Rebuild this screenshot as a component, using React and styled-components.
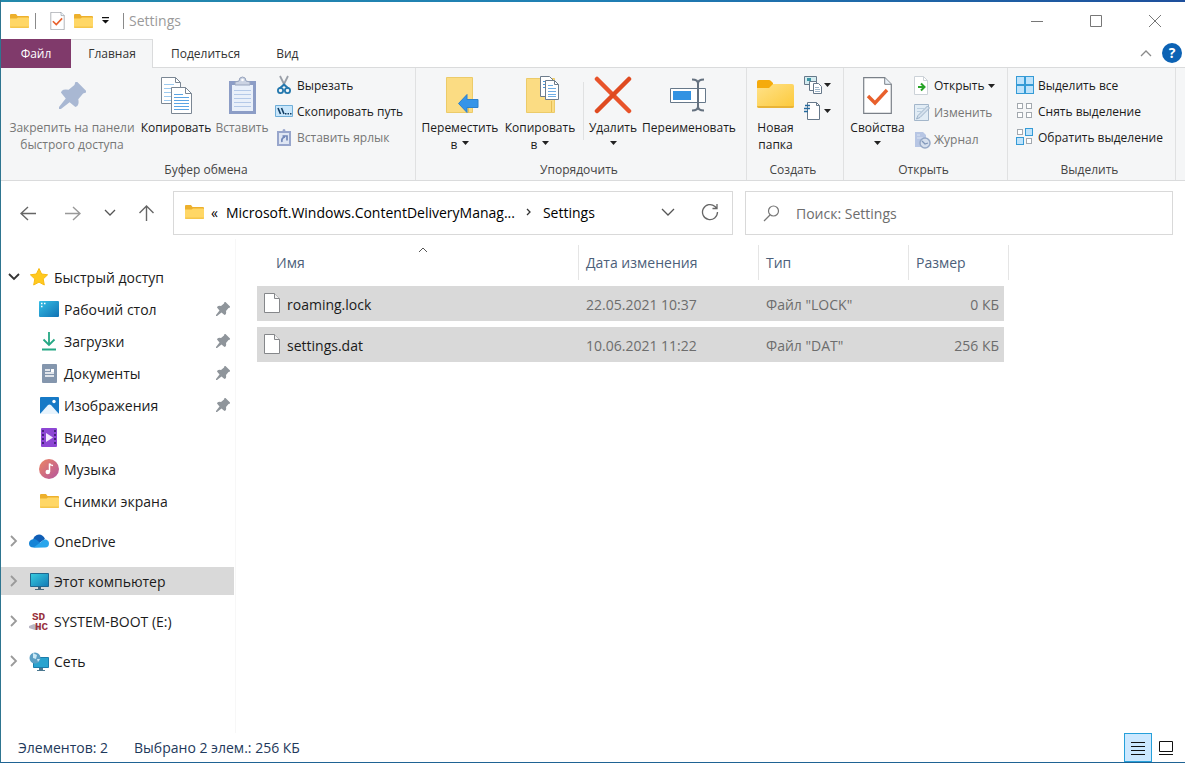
import React from 'react'
import styled, { createGlobalStyle, css } from 'styled-components'

const GlobalStyle = createGlobalStyle`
  * {
    box-sizing: border-box;
  }
  body {
    margin: 0;
    font-family: "Segoe UI", "Open Sans", "Noto Sans", sans-serif;
    font-size: 14px;
    color: #1b1b1b;
    background: white;
  }
  button, input {
    font: inherit;
    color: inherit;
    border: 0;
    padding: 0;
    background: none;
  }
  svg {
    display: block;
    flex: 0 0 auto;
  }
`

const Window = styled.div`
  display: flex;
  flex-direction: column;
  min-height: 100vh;
  border-left: 1px solid #2e7590;
  border-bottom: 1px solid #1f6394;
  & > .accent {
    height: 2px;
    background: linear-gradient(90deg, #2389ab, #1f7fb4 50%, #1e4f9c);
  }
`

/* title bar */

const TitleBar = styled.header`
  display: flex;
  align-items: center;
  height: 37px;
  padding: 0 1px 0 8px;
  & .divider {
    width: 1px;
    height: 16px;
    background: #8a8a8a;
  }
  & h1 {
    margin: 0 auto 0 0;
    font-size: 14px;
    font-weight: 400;
    color: #9a9a9a;
  }
`

const QuickButton = styled.button`
  display: flex;
  justify-content: center;
  width: ${props => props.$width}px;
`

const CaptionButton = styled.button`
  display: flex;
  align-items: center;
  justify-content: center;
  width: 59px;
  height: 37px;
`

/* ribbon */

const TabBar = styled.nav`
  display: flex;
  height: 29px;
  font-size: 12px;
  border-bottom: 1px solid #dadbdc;
  & .tools {
    display: flex;
    align-items: center;
    gap: 10px;
    margin-left: auto;
    padding-right: 3px;
  }
`

const Tab = styled.button`
  height: 29px;
  padding: 0 18px;
  color: #333;
  ${props => props.$file && css`
    width: 70px;
    padding: 0;
    color: white;
    background: #803a6b;
  `}
  ${props => props.$active && css`
    width: 82px;
    padding: 0;
    background: #f5f6f7;
    box-shadow: inset -1px 1px #dadbdc;
  `}
`

const HelpButton = styled.button`
  width: 20px;
  height: 20px;
  border-radius: 50%;
  background: #0c62b4;
  color: white;
  font-size: 14px;
  font-weight: 700;
  line-height: 20px;
`

const Ribbon = styled.section`
  display: flex;
  height: 113px;
  background: #f5f6f7;
  border-bottom: 1px solid #dadbdc;
  font-size: 12px;
  line-height: 17px;
`

const Group = styled.div`
  flex: 0 0 ${props => props.$width}px;
  display: flex;
  flex-direction: column;
  border-right: 1px solid #e0e1e2;
  & .commands {
    display: flex;
    flex: 1;
    padding: 4px 4px 0;
  }
  & .caption {
    padding: 0 4px 2px 0;
    text-align: center;
    color: #444;
  }
`

const LargeButton = styled.button`
  display: flex;
  flex-direction: column;
  align-items: center;
  flex: 0 0 ${props => props.$width}px;
  white-space: nowrap;
  &:disabled {
    color: #767676;
  }
  & .icon {
    display: flex;
    align-items: center;
    height: 46px;
    margin-bottom: 1px;
  }
  & .second {
    display: flex;
    align-items: center;
    justify-content: center;
    gap: 5px;
    height: 17px;
  }
  & .caret {
    margin-bottom: 3px;
  }
`

const SmallColumn = styled.div`
  display: flex;
  flex-direction: column;
  padding-left: ${props => props.$indent || 4}px;
`

const SmallButton = styled.button`
  display: flex;
  align-items: center;
  gap: ${props => props.$gap || 4}px;
  height: ${props => props.$height || 26}px;
  white-space: nowrap;
  &:disabled {
    color: #767676;
  }
`

const Divider = styled.div`
  width: 1px;
  height: 58px;
  margin: 10px 2px 0 3px;
  background: #e0e1e2;
`

/* address line */

const NavRow = styled.div`
  display: grid;
  grid-template-columns: 160px 560fr 428fr;
  gap: 12px;
  height: 58px;
  padding: 10px 12px 4px 0;
  & .history {
    display: grid;
    grid-template-columns: 44px 44px 32px 40px;
    padding-left: 5px;
  }
  & .history button {
    display: flex;
    align-items: center;
    justify-content: center;
  }
`

const Address = styled.div`
  display: flex;
  align-items: center;
  min-width: 0;
  padding: 0 13px 2px 11px;
  border: 1px solid #d9d9d9;
  color: #000;
  & .actions {
    display: flex;
    gap: 26px;
    margin-left: auto;
  }
`

const CrumbList = styled.div`
  display: flex;
  align-items: center;
  gap: 10px;
  padding-left: 7px;
  white-space: nowrap;
  & span {
    margin-right: -2px;
  }
`

const Search = styled.label`
  display: flex;
  align-items: center;
  gap: 16px;
  padding: 0 17px;
  border: 1px solid #d9d9d9;
  & input {
    flex: 1;
    min-width: 0;
    outline: 0;
  }
  & input::placeholder {
    color: #6d6d6d;
    opacity: 1;
  }
`

/* main area */

const Main = styled.main`
  display: flex;
  flex: 1;
`

const Sidebar = styled.aside`
  flex: 0 0 235px;
  padding-top: 24px;
  border-right: 1px solid #f7f7f7;
  & ul {
    margin: 0;
    padding: 0;
    list-style: none;
  }
  & li {
    margin-bottom: 12px;
  }
  & li li {
    margin: 4px 0 0;
  }
`

const TreeItem = styled.button`
  display: flex;
  align-items: center;
  gap: 5px;
  width: 233px;
  height: 28px;
  padding: 0 4px 0 ${props => props.$nested ? 38 : 7}px;
  text-align: left;
  white-space: nowrap;
  background: ${props => props.$selected ? '#d9d9d9' : 'transparent'};
  & .icon {
    display: flex;
    justify-content: center;
    flex: 0 0 20px;
    margin-left: ${props => props.$nested ? 0 : 4}px;
  }
  & .pin {
    margin-left: auto;
  }
`

const Files = styled.div`
  flex: 1;
  padding-left: 21px;
`

const FileTable = styled.table`
  width: 752px;
  table-layout: fixed;
  border-collapse: separate;
  border-spacing: 0 6px;
  & th {
    position: relative;
    height: 35px;
    padding: 0 7px;
    text-align: left;
    font-weight: 400;
    color: #4c607a;
    border-right: 1px solid #e5e5e5;
  }
  & th:first-child {
    padding-left: 19px;
  }
  & th .sort {
    position: absolute;
    top: 2px;
    left: 161px;
  }
  & td {
    height: 35px;
    padding: 1px 7px 0;
    color: #6d6d6d;
    background: #d9d9d9;
  }
  & td:last-child {
    padding-right: 5px;
    text-align: right;
    border-right: 5px solid transparent;
    background-clip: padding-box;
  }
  & .name {
    display: flex;
    align-items: center;
    gap: 7px;
    color: #1b1b1b;
  }
  & .name svg {
    margin-bottom: 3px;
  }
`

const StatusBar = styled.footer`
  display: flex;
  align-items: center;
  gap: 26px;
  height: 29px;
  padding: 0 5px 0 17px;
  color: #1e395b;
  & .views {
    display: flex;
    margin-left: auto;
  }
`

const ViewButton = styled.button`
  display: flex;
  align-items: center;
  justify-content: center;
  width: 28px;
  height: 29px;
  ${props => props.$active && css`
    background: #cce8ff;
    border: 1px solid #26a0da;
  `}
`

/* icons */

const Caret = () => (
  <svg className="caret" width="7" height="4" viewBox="0 0 7 4"><path d="M0 0h7L3.500 4z" fill="#222" /></svg>
)

const Chevron = ({ d, width = 12, height = 12, color = '#555', stroke = 1.3 }) => (
  <svg width={width} height={height} viewBox={`0 0 ${width} ${height}`} fill="none" stroke={color} strokeWidth={stroke}>
    <path d={d} />
  </svg>
)

const FolderIcon = ({ width = 19, height = 16 }) => (
  <svg width={width} height={height} viewBox="0 0 19 16">
    <path d="M0 2q0-1 1-1h5l1.500 2H18q1 0 1 1v3H0z" fill="#edb02c" />
    <path d="M0 5.500h6.500l1.500-1h10q1 0 1 1V14q0 1-1 1H1q-1 0-1-1z" fill="#ffd766" />
    <path d="M0 13.500h19q0 1.500-1 1.500H1q-1 0-1-1.500z" fill="#f5c64b" />
  </svg>
)

const NewFolderIcon = () => (
  <svg width="37" height="32" viewBox="0 0 37 32">
    <defs>
      <linearGradient id="folder" x2="1" y2="1"><stop stopColor="#ffe28a" /><stop offset="1" stopColor="#fcc93a" /></linearGradient>
    </defs>
    <path d="M0 3q0-2 2-2h10q1 0 2 1l2 2v5H0z" fill="#f5ab0c" />
    <path d="M0 9h12l4-4h19q2 0 2 2v20q0 2-2 2H2q-2 0-2-2z" fill="url(#folder)" />
    <path d="M0 27h37q0 2-2 2H2q-2 0-2-2z" fill="#e9b437" />
  </svg>
)

const CheckPageIcon = ({ width, height }) => (
  <svg width={width} height={height} viewBox="0 0 29 37">
    <path d="M.7.7h21l6.600 6.600v29H.7z" fill="white" stroke="#7a8088" strokeWidth="1.200" />
    <path d="M21.700.7v6.600h6.600" fill="#e8f0f8" stroke="#7a8088" />
    <path d="M5 19l7 7L24 13" fill="none" stroke="#e8602c" strokeWidth="3.400" />
  </svg>
)

const PinIcon = ({ size = 14, color = '#8f959b' }) => (
  <svg width={size} height={size} viewBox="0 0 28 28" fill={color}>
    <path d="M17 0q1-1 2 0l9 9q1 1 0 2l-3 1-5 6q1 5-1 7l-2 1-6-5-9 7H0v-2l7-9-5-6 1-2q2-2 7-1l6-5z" />
  </svg>
)

const CopyPagesIcon = ({ width = 31, height = 37 }) => (
  <svg width={width} height={height} viewBox="0 0 31 37" stroke="#7b8794">
    <path d="M.5.5h14l5 5v21H.5z" fill="white" />
    <path d="M14.500.5v5h5" fill="none" />
    <path d="M3 7.500h10M3 11.500h13M3 15.500h7M3 19.500h7M3 23.500h7" stroke="#9ccaf0" />
    <path d="M10.500 10.500h14l6 6v20h-20z" fill="white" />
    <path d="M24.500 10.500v6h6" fill="none" />
    <path d="M13 17.500h9M13 20.500h15M13 23.500h15M13 26.500h15M13 29.500h15M13 32.500h15" stroke="#5aa4e4" />
  </svg>
)

const ClipboardIcon = () => (
  <svg width="27" height="38" viewBox="0 0 27 38">
    <path d="M0 5h27v33H0z" fill="#8c9dc6" />
    <path d="M3 9h21v26H3z" fill="#e9f0fa" />
    <path d="M5 14.500h17M5 18.500h17M5 22.500h17M5 26.500h17M5 30.500h17" stroke="#b4c9e8" />
    <path d="M6 9V6l4-1q0-4 3.500-4t3.500 4l4 1v3z" fill="#cbd3e3" stroke="#98a4bd" />
    <circle cx="13.500" cy="4" r="1.300" fill="white" />
  </svg>
)

const ScissorsIcon = () => (
  <svg width="18" height="20" viewBox="0 0 18 20" fill="none">
    <path d="M5 1l5 10M13 1L8 11" stroke="#9a9fa8" strokeWidth="1.800" />
    <circle cx="5.500" cy="15.500" r="2.600" stroke="#2478ae" strokeWidth="1.800" />
    <circle cx="12.500" cy="15.500" r="2.600" stroke="#2478ae" strokeWidth="1.800" />
    <path d="M4.500 13.500L9 9.500l4.500 4" stroke="#2478ae" strokeWidth="2" />
  </svg>
)

const PathIcon = () => (
  <svg width="18" height="12" viewBox="0 0 18 12">
    <path d="M.5.5h17v11H.5z" fill="#c8e6fb" stroke="#6faed8" />
    <path d="M3 3l2.500 6M6.500 3L9 9" stroke="#123d63" strokeWidth="1.600" />
    <path d="M10 8h1.500v1.500H10zM12.500 8H14v1.500h-1.500zM15 8h1.500v1.500H15z" fill="#123d63" />
  </svg>
)

const PasteLinkIcon = () => (
  <svg width="18" height="19" viewBox="0 0 18 19">
    <path d="M3 4h12v13H3z" fill="#dfe6f3" stroke="#98a6cc" strokeWidth="2" />
    <path d="M6 5V3h1.500q0-2 1.500-2t1.500 2H12v2z" fill="#98a6cc" />
    <path d="M7 14q-1-4 3-5M7.500 8H12v4.500" fill="none" stroke="#7287b8" strokeWidth="1.700" />
  </svg>
)

const MoveToIcon = () => (
  <svg width="40" height="38" viewBox="-6 0 40 38">
    <path d="M.5 1.500h26v35H.5z" fill="#fbdc83" stroke="#eccb69" />
    <path d="M22.500 27v9.500" stroke="#e6bf55" />
    <path d="M12.500 27.500L21 18.500v5h11v8H21v5z" fill="#3594e8" stroke="#2d81cc" />
  </svg>
)

const CopyToIcon = () => (
  <svg width="40" height="38" viewBox="-6 0 40 38">
    <path d="M.5 2.500h28v34H.5z" fill="#fbdc83" stroke="#eccb69" />
    <path d="M25.500 25v11" stroke="#e6bf55" />
    <path d="M14.500.5h9l4 4v16h-13z" fill="white" stroke="#6d7c8c" />
    <path d="M17 5.500h6M17 8.500h8M17 11.500h8" stroke="#4b96d8" />
    <path d="M19.500 4.500h9l4 4v15h-13z" fill="white" stroke="#6d7c8c" />
    <path d="M28.500 4.500v4h4" fill="none" stroke="#6d7c8c" />
    <path d="M22 9.500h5M22 12.500h8M22 15.500h8M22 18.500h8M22 20.500h8" stroke="#6fade4" />
  </svg>
)

const DeleteIcon = () => (
  <svg width="38" height="38" viewBox="0 0 38 38" strokeLinecap="round" strokeWidth="4.500">
    <path d="M3 3l32 32" stroke="#e8532a" />
    <path d="M35 3L3 35" stroke="#df4a20" />
  </svg>
)

const RenameIcon = () => (
  <svg width="38" height="34" viewBox="0 0 38 34" fill="none">
    <path d="M.5 10.500h35v14H.5z" fill="white" stroke="#66788a" />
    <path d="M3 13h18v9H3z" fill="#3292e2" />
    <path d="M22 1.500q6 0 6 4v23q0 4-6 4M34 1.500q-6 0-6 4v23q0 4 6 4" stroke="#64717f" strokeWidth="2" />
  </svg>
)

const NewItemIcon = () => (
  <svg width="18" height="18" viewBox="0 0 18 18" stroke="#66788a">
    <path d="M.5.5h12v8H.5z" fill="#d4ecf0" />
    <path d="M3 3.500h4" stroke="#3b94a4" strokeWidth="3" />
    <path d="M5.500 5.500h7v9h-7z" fill="white" />
    <path d="M9.500 7.500h5l3 3v7h-8z" fill="white" />
    <path d="M11 11.500h4M11 13.500h5M11 15.500h5" stroke="#9eb6ca" />
  </svg>
)

const EasyAccessIcon = () => (
  <svg width="18" height="20" viewBox="0 0 18 20">
    <path d="M3.500 1.500h9l3 3v14h-12z" fill="white" stroke="#66788a" />
    <path d="M12.500 1.500v3h3" fill="none" stroke="#66788a" />
    <path d="M1 4.500h5M0 7.500h6M0 10.500h4" stroke="#246a9e" strokeWidth="1.600" />
  </svg>
)

const OpenIcon = () => (
  <svg width="16" height="19" viewBox="0 0 16 19">
    <path d="M.5.5h9l4 4v14H.5z" fill="white" stroke="#ccd2d8" />
    <path d="M9.500.5v4h4" fill="none" stroke="#ccd2d8" />
    <path d="M4 11h6M7 7.500l3.500 3.500L7 14.500" fill="none" stroke="#28a428" strokeWidth="2" />
  </svg>
)

const EditIcon = () => (
  <svg width="16" height="18" viewBox="0 0 16 18">
    <path d="M.5.5h14v16H.5z" fill="#e1ecf5" stroke="#a3b6ca" />
    <path d="M3 4.500h7M3 7.500h4" stroke="#bccfe0" />
    <path d="M2.500 15l1.500-3.500L13.500 2l2 2L6 13.500z" fill="#d5e1ed" stroke="#9db3c9" />
  </svg>
)

const HistoryIcon = () => (
  <svg width="17" height="18" viewBox="0 0 17 18">
    <path d="M1 1h8l3 3v12H1z" fill="#b7c6e4" />
    <path d="M3 4h3M3 7h6" stroke="#dce5f3" />
    <circle cx="11" cy="12" r="5" fill="#d5dfed" stroke="#96a9c7" strokeWidth="1.500" />
    <path d="M8 10l3 3 3-1" fill="none" stroke="#8298ba" strokeWidth="1.300" />
  </svg>
)

// four tiles, 'filled' says which ones are selected
const TilesIcon = ({ filled, solid }) => {
  const corners = solid ? [[0, 0], [9, 0], [0, 9], [9, 9]] : [[1, 1], [10, 1], [1, 10], [10, 10]]
  return (
    <svg width="18" height="18" viewBox="0 0 18 18">
      {corners.map(([x, y], i) => {
        const on = filled[i]
        const grow = on && !solid ? 1 : 0
        const size = solid ? 8 : on ? 7 : 5
        return (
          <rect key={i} x={x + 0.5 - grow} y={y + 0.5 - grow} width={size} height={size}
            fill={on ? '#bfe3fb' : 'white'} stroke={on ? '#359bd6' : '#a2a8ae'} />
        )
      })}
    </svg>
  )
}

const StarIcon = () => (
  <svg width="20" height="20" viewBox="0 0 20 20">
    <path d="M10 1.500l2.600 5.500 6 .8-4.400 4.200 1.100 6L10 15.100 4.700 18l1.100-6L1.400 7.800l6-.8z" fill="#ffc91f" stroke="#f9bb10" strokeLinejoin="round" />
  </svg>
)

const DesktopIcon = () => (
  <svg width="20" height="16" viewBox="0 0 20 16">
    <defs>
      <linearGradient id="desk" x2="1" y2="1"><stop stopColor="#36bfe6" /><stop offset="1" stopColor="#1072b4" /></linearGradient>
    </defs>
    <rect width="20" height="16" rx="1" fill="url(#desk)" />
    <path d="M2 2.500h1.500M2 5.500h1.500M5 2.500h1.500" stroke="white" strokeWidth="1.300" />
  </svg>
)

const DownloadIcon = () => (
  <svg width="16" height="20" viewBox="0 0 16 20" fill="none" stroke="#25a884" strokeWidth="1.800">
    <path d="M8 1v13M2.500 8.500L8 14l5.500-5.500M1 18.500h14" />
  </svg>
)

const DocumentIcon = () => (
  <svg width="15" height="19" viewBox="0 0 15 19">
    <rect width="15" height="19" rx="1" fill="#8496ad" />
    <path d="M3 6h5M3 9h9M3 12h9" stroke="white" strokeWidth="1.300" />
    <path d="M9 5h3v3H9z" fill="white" />
  </svg>
)

const PictureIcon = () => (
  <svg width="19" height="17" viewBox="0 0 19 17">
    <rect width="19" height="17" rx="1" fill="#1679c6" />
    <path d="M0 17l8-9q1.500-1 3 0l8 9z" fill="#e8f4fd" />
    <circle cx="14" cy="4.500" r="1.700" fill="white" />
  </svg>
)

const VideoIcon = () => (
  <svg width="16" height="19" viewBox="0 0 16 19">
    <rect width="16" height="19" rx="1" fill="#8d46d4" />
    <path d="M2 2v16M14 2v16" stroke="#45207d" strokeWidth="2" strokeDasharray="2 2" />
    <path d="M5 5v9l7-4.500z" fill="#f2e7ff" />
  </svg>
)

const MusicIcon = () => (
  <svg width="20" height="20" viewBox="0 0 20 20">
    <defs>
      <linearGradient id="music" x2="1" y2="1"><stop stopColor="#ed8663" /><stop offset="1" stopColor="#b4559f" /></linearGradient>
    </defs>
    <circle cx="10" cy="10" r="10" fill="url(#music)" />
    <path d="M10.500 13V4.500q1 2 3.500 2" fill="none" stroke="white" strokeWidth="1.500" />
    <circle cx="8.800" cy="13" r="2.300" fill="white" />
  </svg>
)

const CloudIcon = () => (
  <svg width="20" height="14" viewBox="0 0 20 14">
    <path d="M4 6q1-5 6-5.500 4 0 6 4.500l-7 5z" fill="#0f5db5" />
    <path d="M4.500 13.500Q0 13.500 0 9.500q0-4 5-4.500 2 0 4 2l6 6z" fill="#1584d6" />
    <path d="M4.500 13.500L12 8q2-3 5-2.500 3 1 3 4 0 4-4 4z" fill="#29a5ec" />
  </svg>
)

const MonitorIcon = () => (
  <svg width="19" height="17" viewBox="0 0 19 17">
    <defs>
      <linearGradient id="screen" x2="1" y2="1"><stop stopColor="#37cde0" /><stop offset="1" stopColor="#1479b5" /></linearGradient>
    </defs>
    <path d="M.5.5h18v13H.5z" fill="url(#screen)" stroke="#20668f" />
    <path d="M8 14h3v2H8zM5 16h9v1H5z" fill="#46677c" />
  </svg>
)

const SdCardIcon = () => (
  <svg width="20" height="21" viewBox="0 0 20 21" fontFamily="Liberation Mono" fontWeight="700" fontSize="11" fill="#98303c">
    <path d="M0 15l5-2 6 2v3l-5 1-6-2z" fill="#b9b6c4" />
    <text x="3" y="9">SD</text>
    <text x="6" y="19">HC</text>
  </svg>
)

const NetworkIcon = () => (
  <svg width="20" height="19" viewBox="0 0 20 19">
    <path d="M4.500 5.500h15v10h-15z" fill="#29a3cf" stroke="#1b7cab" />
    <path d="M10 16h4v2h-4zM8 18h8v1H8z" fill="#4b7890" />
    <circle cx="6" cy="6" r="5.500" fill="#5b9fc4" />
    <path d="M4 1l4 2-1 4-3-1zM8 7l3 0-2 3z" fill="#c9e8f5" />
  </svg>
)

const FileIcon = () => (
  <svg width="16" height="20" viewBox="0 0 16 20" stroke="#85878a">
    <path d="M.5.5h10l5 5v14H.5z" fill="white" />
    <path d="M10.500.5v5h5" fill="#f1f1f1" />
  </svg>
)

const ArrowIcon = ({ color = '#666', d }) => (
  <svg width="17" height="17" viewBox="0 0 17 17" fill="none" stroke={color} strokeWidth="1.400"><path d={d} /></svg>
)

const quickAccess = [
  { name: 'Рабочий стол', icon: <DesktopIcon />, pinned: true },
  { name: 'Загрузки', icon: <DownloadIcon />, pinned: true },
  { name: 'Документы', icon: <DocumentIcon />, pinned: true },
  { name: 'Изображения', icon: <PictureIcon />, pinned: true },
  { name: 'Видео', icon: <VideoIcon /> },
  { name: 'Музыка', icon: <MusicIcon /> },
  { name: 'Снимки экрана', icon: <FolderIcon /> },
]

const drives = [
  { name: 'OneDrive', icon: <CloudIcon /> },
  { name: 'Этот компьютер', icon: <MonitorIcon />, selected: true },
  { name: 'SYSTEM-BOOT (E:)', icon: <SdCardIcon /> },
  { name: 'Сеть', icon: <NetworkIcon /> },
]

const files = [
  { name: 'roaming.lock', date: '22.05.2021 10:37', type: 'Файл "LOCK"', size: '0 КБ' },
  { name: 'settings.dat', date: '10.06.2021 11:22', type: 'Файл "DAT"', size: '256 КБ' },
]

const Large = ({ icon, label, second, caret, width, disabled }) => (
  <LargeButton $width={width} disabled={disabled}>
    <span className="icon">{icon}</span>
    <span>{label}</span>
    <span className="second">{second}{caret && <Caret />}</span>
  </LargeButton>
)

const RibbonPanel = () => (
  <Ribbon>
    <Group $width={415}>
      <div className="commands">
        <Large width={134} disabled icon={<PinIcon size={27} color="#a9b8d3" />} label="Закрепить на панели" second="быстрого доступа" />
        <Large width={74} icon={<CopyPagesIcon />} label="Копировать" />
        <Large width={58} disabled icon={<ClipboardIcon />} label="Вставить" />
        <SmallColumn>
          <SmallButton><ScissorsIcon />Вырезать</SmallButton>
          <SmallButton><PathIcon />Скопировать путь</SmallButton>
          <SmallButton disabled><PasteLinkIcon />Вставить ярлык</SmallButton>
        </SmallColumn>
      </div>
      <div className="caption">Буфер обмена</div>
    </Group>
    <Group $width={331}>
      <div className="commands">
        <Large width={80} icon={<MoveToIcon />} label="Переместить" second="в" caret />
        <Large width={80} icon={<CopyToIcon />} label="Копировать" second="в" caret />
        <Divider />
        <Large width={54} icon={<DeleteIcon />} label="Удалить" caret />
        <Large width={98} icon={<RenameIcon />} label="Переименовать" />
      </div>
      <div className="caption">Упорядочить</div>
    </Group>
    <Group $width={97}>
      <div className="commands">
        <Large width={49} icon={<NewFolderIcon />} label="Новая" second="папка" />
        <SmallColumn>
          <SmallButton $gap={2} aria-label="Создать элемент"><NewItemIcon /><Caret /></SmallButton>
          <SmallButton $gap={2} aria-label="Простой доступ"><EasyAccessIcon /><Caret /></SmallButton>
        </SmallColumn>
      </div>
      <div className="caption">Создать</div>
    </Group>
    <Group $width={164}>
      <div className="commands">
        <Large width={59} icon={<CheckPageIcon width={29} height={37} />} label="Свойства" caret />
        <SmallColumn $indent={7}>
          <SmallButton $height={27}><OpenIcon />Открыть<Caret /></SmallButton>
          <SmallButton $height={27} disabled><EditIcon />Изменить</SmallButton>
          <SmallButton $height={27} $gap={3} disabled><HistoryIcon />Журнал</SmallButton>
        </SmallColumn>
      </div>
      <div className="caption">Открыть</div>
    </Group>
    <Group $width={168}>
      <div className="commands">
        <SmallColumn>
          <SmallButton><TilesIcon solid filled={[1, 1, 1, 1]} />Выделить все</SmallButton>
          <SmallButton><TilesIcon filled={[0, 0, 0, 0]} />Снять выделение</SmallButton>
          <SmallButton><TilesIcon filled={[0, 1, 1, 0]} />Обратить выделение</SmallButton>
        </SmallColumn>
      </div>
      <div className="caption">Выделить</div>
    </Group>
  </Ribbon>
)

const Tree = () => (
  <Sidebar>
    <ul>
      <li>
        <TreeItem>
          <Chevron d="M1 3l5 5 5-5" color="#333" stroke={1.8} />
          <span className="icon"><StarIcon /></span>
          Быстрый доступ
        </TreeItem>
        <ul>
          {quickAccess.map(item => (
            <li key={item.name}>
              <TreeItem $nested>
                <span className="icon">{item.icon}</span>
                {item.name}
                {item.pinned && <span className="pin"><PinIcon /></span>}
              </TreeItem>
            </li>
          ))}
        </ul>
      </li>
      {drives.map(item => (
        <li key={item.name}>
          <TreeItem $selected={item.selected}>
            <Chevron d="M3 1l5 5-5 5" color="#9a9a9a" stroke={1.8} />
            <span className="icon">{item.icon}</span>
            {item.name}
          </TreeItem>
        </li>
      ))}
    </ul>
  </Sidebar>
)

const FileList = () => (
  <Files>
    <FileTable>
      <colgroup>
        <col width="322" />
        <col width="180" />
        <col width="150" />
        <col />
      </colgroup>
      <thead>
        <tr>
          <th>Имя<span className="sort"><Chevron d="M1 5l4-4 4 4" width={10} height={6} stroke={1} /></span></th>
          <th>Дата изменения</th>
          <th>Тип</th>
          <th>Размер</th>
        </tr>
      </thead>
      <tbody>
        {files.map(file => (
          <tr key={file.name}>
            <td><span className="name"><FileIcon />{file.name}</span></td>
            <td>{file.date}</td>
            <td>{file.type}</td>
            <td>{file.size}</td>
          </tr>
        ))}
      </tbody>
    </FileTable>
  </Files>
)

export default function App() {
  return (
    <Window>
      <GlobalStyle />
      <div className="accent" />
      <TitleBar>
        <QuickButton $width={20} aria-label="Окно"><FolderIcon /></QuickButton>
        <QuickButton $width={12} as="span"><span className="divider" /></QuickButton>
        <QuickButton $width={32} aria-label="Свойства"><CheckPageIcon width={15} height={18} /></QuickButton>
        <QuickButton $width={20} aria-label="Новая папка"><FolderIcon /></QuickButton>
        <QuickButton $width={24} aria-label="Настройка панели">
          <svg width="7" height="7" viewBox="0 0 7 7"><path d="M0 0h7v1.200H0zM0 3h7L3.500 6.500z" fill="#111" /></svg>
        </QuickButton>
        <QuickButton $width={12} as="span"><span className="divider" /></QuickButton>
        <h1>Settings</h1>
        <CaptionButton aria-label="Свернуть"><Chevron d="M0 6.5h12" color="#777" stroke={1} /></CaptionButton>
        <CaptionButton aria-label="Развернуть"><Chevron d="M.5.5h11v11H.5z" color="#777" stroke={1} /></CaptionButton>
        <CaptionButton aria-label="Закрыть"><Chevron d="M0 0l12 12M12 0L0 12" color="#777" stroke={1} /></CaptionButton>
      </TitleBar>
      <TabBar>
        <Tab $file>Файл</Tab>
        <Tab $active>Главная</Tab>
        <Tab>Поделиться</Tab>
        <Tab>Вид</Tab>
        <div className="tools">
          <button aria-label="Свернуть ленту"><Chevron d="M1 9l5-5 5 5" color="#8a8a8a" /></button>
          <HelpButton aria-label="Справка">?</HelpButton>
        </div>
      </TabBar>
      <RibbonPanel />
      <NavRow>
        <div className="history">
          <button aria-label="Назад"><ArrowIcon d="M8 2L1 8.500 8 15M1 8.500h15" /></button>
          <button aria-label="Вперед"><ArrowIcon color="#999" d="M9 2l7 6.500L9 15M16 8.500H1" /></button>
          <button aria-label="Последние"><Chevron d="M1 3l5 5 5-5" /></button>
          <button aria-label="Вверх"><ArrowIcon d="M1.500 8l7-7 7 7M8.500 1v15" /></button>
        </div>
        <Address>
          <FolderIcon />
          <CrumbList>
            <span>«</span>
            <button>Microsoft.Windows.ContentDeliveryManag...</button>
            <Chevron d="M2 1l3 3-3 3" width={8} height={8} color="#333" />
            <button>Settings</button>
          </CrumbList>
          <div className="actions">
            <button aria-label="Список адресов"><Chevron d="M1 4l6 6 6-6" width={14} height={14} /></button>
            <button aria-label="Обновить">
              <svg width="18" height="18" viewBox="0 0 18 18" fill="none" stroke="#666" strokeWidth="1.300">
                <path d="M16.500 9A7.500 7.500 0 1 1 14 3.500l1.500 1.500M16 1v4.500h-4.500" />
              </svg>
            </button>
          </div>
        </Address>
        <Search>
          <svg width="17" height="17" viewBox="0 0 17 17" fill="none" stroke="#777" strokeWidth="1.200">
            <circle cx="10.500" cy="6" r="5" />
            <path d="M7 10l-6 6" />
          </svg>
          <input type="search" aria-label="Поиск" placeholder="Поиск: Settings" />
        </Search>
      </NavRow>
      <Main>
        <Tree />
        <FileList />
      </Main>
      <StatusBar>
        <span>Элементов: 2</span>
        <span>Выбрано 2 элем.: 256 КБ</span>
        <div className="views">
          <ViewButton $active aria-label="Таблица">
            <svg width="14" height="14" viewBox="0 0 14 14"><path d="M0 1.500h14M0 5.500h14M0 9.500h14M0 13.500h14" stroke="#111" /></svg>
          </ViewButton>
          <ViewButton aria-label="Крупные значки">
            <svg width="14" height="14" viewBox="0 0 14 14"><path d="M.5.500h13v10H.5zM0 13.500h14" fill="none" stroke="#111" /></svg>
          </ViewButton>
        </div>
      </StatusBar>
    </Window>
  )
}
